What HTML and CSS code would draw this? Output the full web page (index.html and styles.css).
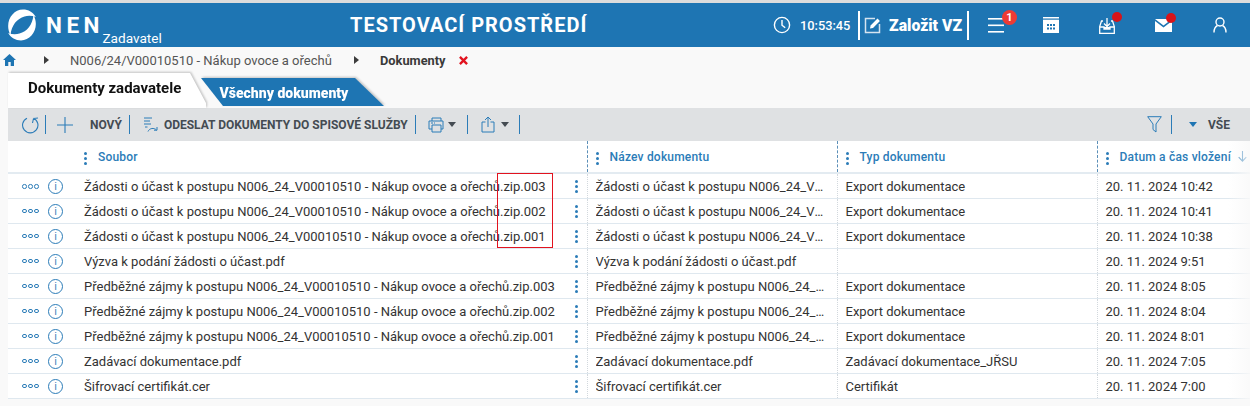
FILE: index.html
```html
<!DOCTYPE html>
<html lang="cs">
<head>
<meta charset="utf-8">
<title>NEN - Dokumenty</title>
<link rel="stylesheet" href="styles.css">
</head>
<body>
<header class="topbar">
  <div class="brand">
    <svg class="logo" width="32" height="32" viewBox="0 0 32 32" fill="#fff"><path d="M4.500 26C-2 14 6 .6 17 .6c5.500 0 10 2.600 12.800 7.400C26 6.500 22 6.400 18.500 7.400 11 9.500 5.500 16 4.500 26z"/><path d="M4.500 26C-2 14 6 .6 17 .6c5.500 0 10 2.600 12.800 7.400C26 6.500 22 6.400 18.500 7.400 11 9.500 5.500 16 4.500 26z" transform="rotate(180 16 16)"/></svg>
    <span class="nen">NEN</span>
    <span class="role">Zadavatel</span>
  </div>
  <div class="env">TESTOVACÍ PROSTŘEDÍ</div>
  <div class="actions">
    <svg class="clock" width="18" height="18" viewBox="0 0 18 18" fill="none" stroke="#fff" stroke-width="1.4"><circle cx="9" cy="9" r="7.6"/><path d="M9 4v5.2l3.2 2.6"/></svg>
    <span class="time">10:53:45</span>
    <div class="create">
      <svg width="18" height="18" viewBox="0 0 18 18" fill="none" stroke="#fff" stroke-width="1.5"><path d="M11 2.500H1.500v14h14V8" stroke="#d5e4f0"/><path d="M6 12.500l.6-3L13.500 2.600l2.400 2.400-6.900 6.900z" fill="#fff" stroke="none"/></svg>
      <span>Založit VZ</span>
    </div>
    <div class="ico menu"><svg width="16" height="15" viewBox="0 0 16 15" fill="#fff"><rect width="16" height="1.600"/><rect y="6.500" width="16" height="1.600"/><rect y="13" width="16" height="1.600"/></svg><b class="badge">1</b></div>
    <div class="ico cal"><svg width="16" height="16" viewBox="0 0 16 16"><rect width="16" height="16" fill="#fff"/><rect y="1.500" width="16" height="1.200" fill="#1e75b3"/><path d="M4 7h2v2H4zM7 7h2v2H7zM10 7h2v2h-2zM4 10.500h2v2H4zM7 10.500h2v2H7zM10 10.500h2v2h-2z" fill="#1e75b3"/></svg></div>
    <div class="ico inbox"><svg width="16" height="17" viewBox="0 0 16 17" fill="none" stroke="#fff" stroke-width="1.300"><path d="M8 1v8M5 6.500L8 9.500l3-3"/><path d="M4 4H2.500L.7 9.500v6.800h14.600V9.500L13.500 4H12"/><path d="M.7 10H5v2h6v-2h4.300" fill="#fff"/></svg><i class="dot"></i></div>
    <div class="ico mail"><svg width="17" height="13" viewBox="0 0 17 13"><path d="M0 0h17L8.500 6.500z M0 2l8.500 6.500L17 2v11H0z" fill="#fff"/></svg><i class="dot"></i></div>
    <div class="ico user"><svg width="14" height="16" viewBox="0 0 14 16" fill="none" stroke="#fff" stroke-width="1.400"><circle cx="7" cy="5" r="4"/><path d="M1 15.500c0-3.500 1.500-6 3.500-7M13 15.500c0-3.500-1.500-6-3.500-7"/></svg></div>
  </div>
</header>

<nav class="crumbs">
  <svg class="home" width="13" height="12" viewBox="0 0 13 12" fill="#1e75b3"><path d="M6.500 0L0 6h2v6h3.300V8h2.400v4H11V6h2z"/></svg>
  <i class="arrow a1"></i>
  <span class="crumb">N006/24/V00010510 - Nákup ovoce a ořechů</span>
  <i class="arrow a2"></i>
  <strong class="current">Dokumenty</strong>
  <svg class="close" width="9" height="9" viewBox="0 0 10 10" stroke="#e2131f" stroke-width="2.600"><path d="M1 1l8 8M9 1l-8 8"/></svg>
</nav>

<div class="tabs">
  <div class="tab-wrap"><div class="tab active">Dokumenty zadavatele</div></div>
  <div class="tab-wrap"><div class="tab other">Všechny dokumenty</div></div>
</div>

<div class="toolbar">
  <svg class="t-refresh" width="18" height="18" viewBox="0 0 18 18" fill="none" stroke="#2b7cb8" stroke-width="1.100"><path d="M6 2.200a7.700 7.700 0 1 0 6.500 0M12.500 2.500L11.500 7M12.500 2.500L17 2"/></svg>
  <i class="sep s1"></i>
  <svg class="t-plus" width="16" height="16" viewBox="0 0 16 16" stroke="#2b7cb8" stroke-width="1.100"><path d="M8 0v16M0 8h16"/></svg>
  <span class="t-new">NOVÝ</span>
  <i class="sep s2"></i>
  <svg class="t-send" width="14" height="15" viewBox="0 0 14 15" fill="none" stroke="#2b7cb8" stroke-width="1"><path d="M0 1h8M0 4h6M0 7h7M1 10h2.500M4 14.500c1.500-3.500 6-4 8.500-1.500M13 10v3.200h-3"/></svg>
  <span class="t-send-label">ODESLAT DOKUMENTY DO SPISOVÉ SLUŽBY</span>
  <i class="sep s3"></i>
  <svg class="t-print" width="16" height="16" viewBox="0 0 16 16" fill="none" stroke="#2b7cb8" stroke-width="1"><path d="M4 4V1h9v3M4 12H1V4h14v8h-2M4 8h9v7H4z"/><path d="M3 6h2M6 6h1"/></svg>
  <i class="caret"></i>
  <i class="sep s4"></i>
  <svg class="t-share" width="14" height="17" viewBox="0 0 14 17" fill="none" stroke="#2b7cb8" stroke-width="1"><path d="M4.500 6H1v10h12V6H9.500M7 11V1M4 4l3-3 3 3"/></svg>
  <i class="caret c-share"></i>
  <i class="sep s5"></i>
  <span class="grow"></span>
  <svg class="t-filter" width="15" height="17" viewBox="0 0 15 17" fill="none" stroke="#2b7cb8" stroke-width="1"><path d="M.7.700h13.600L9 8v8L6 13.500V8z"/></svg>
  <i class="sep s6"></i>
  <i class="caret blue"></i>
  <span class="t-all">VŠE</span>
</div>

<div class="grid-wrap">
  <table class="grid">
    <colgroup><col class="c0"><col class="c1"><col class="c2"><col class="c3"><col class="c4"></colgroup>
    <thead>
      <tr>
        <th></th>
        <th><span class="kebab hd"><i></i><i></i><i></i></span>Soubor</th>
        <th class="div"><span class="kebab hd"><i></i><i></i><i></i></span>Název dokumentu</th>
        <th class="div"><span class="kebab hd"><i></i><i></i><i></i></span>Typ dokumentu</th>
        <th class="div"><span class="kebab hd"><i></i><i></i><i></i></span>Datum a čas vložení<svg class="sort" width="9" height="11" viewBox="0 0 9 11" fill="none" stroke="#2b7cb8" stroke-width="1.100"><path d="M4.500 0v10M.7 6.200l3.800 3.900 3.800-3.900"/></svg></th>
      </tr>
    </thead>
    <tbody>
      <tr><td class="act"><span class="dots"><i></i><i></i><i></i></span><span class="info">i</span></td><td class="file">Žádosti o účast k postupu N006_24_V00010510 - Nákup ovoce a ořechů.zip.003<span class="kebab"><i></i><i></i><i></i></span></td><td><div class="cut">Žádosti o účast k postupu N006_24_V00010510 - Nákup ovoce a ořechů.zip.003</div></td><td>Export dokumentace</td><td>20. 11. 2024 10:42</td></tr>
      <tr><td class="act"><span class="dots"><i></i><i></i><i></i></span><span class="info">i</span></td><td class="file">Žádosti o účast k postupu N006_24_V00010510 - Nákup ovoce a ořechů.zip.002<span class="kebab"><i></i><i></i><i></i></span></td><td><div class="cut">Žádosti o účast k postupu N006_24_V00010510 - Nákup ovoce a ořechů.zip.002</div></td><td>Export dokumentace</td><td>20. 11. 2024 10:41</td></tr>
      <tr><td class="act"><span class="dots"><i></i><i></i><i></i></span><span class="info">i</span></td><td class="file">Žádosti o účast k postupu N006_24_V00010510 - Nákup ovoce a ořechů.zip.001<span class="kebab"><i></i><i></i><i></i></span></td><td><div class="cut">Žádosti o účast k postupu N006_24_V00010510 - Nákup ovoce a ořechů.zip.001</div></td><td>Export dokumentace</td><td>20. 11. 2024 10:38</td></tr>
      <tr><td class="act"><span class="dots"><i></i><i></i><i></i></span><span class="info">i</span></td><td class="file">Výzva k podání žádosti o účast.pdf<span class="kebab"><i></i><i></i><i></i></span></td><td><div class="cut">Výzva k podání žádosti o účast.pdf</div></td><td></td><td>20. 11. 2024 9:51</td></tr>
      <tr><td class="act"><span class="dots"><i></i><i></i><i></i></span><span class="info">i</span></td><td class="file">Předběžné zájmy k postupu N006_24_V00010510 - Nákup ovoce a ořechů.zip.003<span class="kebab"><i></i><i></i><i></i></span></td><td><div class="cut">Předběžné zájmy k postupu N006_24_V00010510 - Nákup ovoce a ořechů.zip.003</div></td><td>Export dokumentace</td><td>20. 11. 2024 8:05</td></tr>
      <tr><td class="act"><span class="dots"><i></i><i></i><i></i></span><span class="info">i</span></td><td class="file">Předběžné zájmy k postupu N006_24_V00010510 - Nákup ovoce a ořechů.zip.002<span class="kebab"><i></i><i></i><i></i></span></td><td><div class="cut">Předběžné zájmy k postupu N006_24_V00010510 - Nákup ovoce a ořechů.zip.002</div></td><td>Export dokumentace</td><td>20. 11. 2024 8:04</td></tr>
      <tr><td class="act"><span class="dots"><i></i><i></i><i></i></span><span class="info">i</span></td><td class="file">Předběžné zájmy k postupu N006_24_V00010510 - Nákup ovoce a ořechů.zip.001<span class="kebab"><i></i><i></i><i></i></span></td><td><div class="cut">Předběžné zájmy k postupu N006_24_V00010510 - Nákup ovoce a ořechů.zip.001</div></td><td>Export dokumentace</td><td>20. 11. 2024 8:01</td></tr>
      <tr><td class="act"><span class="dots"><i></i><i></i><i></i></span><span class="info">i</span></td><td class="file">Zadávací dokumentace.pdf<span class="kebab"><i></i><i></i><i></i></span></td><td><div class="cut">Zadávací dokumentace.pdf</div></td><td>Zadávací dokumentace_JŘSU</td><td>20. 11. 2024 7:05</td></tr>
      <tr><td class="act"><span class="dots"><i></i><i></i><i></i></span><span class="info">i</span></td><td class="file">Šifrovací certifikát.cer<span class="kebab"><i></i><i></i><i></i></span></td><td><div class="cut">Šifrovací certifikát.cer</div></td><td>Certifikát</td><td>20. 11. 2024 7:00</td></tr>
    </tbody>
  </table>
  <div class="redbox"></div>
  <div class="fade"></div>
</div>
</body>
</html>
```

FILE: styles.css
```css
* { box-sizing: border-box; }
html, body { margin: 0; height: 406px; overflow: hidden; }
body {
  background: #f9f9f9;
  border-top: 3px solid #dcdcdc;
  font-family: Roboto, "Liberation Sans", sans-serif;
  color: #2b2b2b;
}
i { display: block; font-style: normal; }

.topbar {
  height: 44px;
  background: #1e75b3;
  color: #fff;
  display: flex;
  align-items: center;
  position: relative;
}
.brand { display: flex; align-items: center; width: 350px; padding-left: 6px; height: 44px; }
.logo { flex: none; }
.nen { font-size: 22.500px; font-weight: 700; letter-spacing: 4.500px; margin-left: 8px; }
.role { font-size: 13.600px; align-self: flex-end; margin-left: -1.500px; line-height: 18px; }
.env { font-size: 20px; font-weight: 700; letter-spacing: 1px; white-space: nowrap; }
.actions { margin-left: auto; display: flex; align-items: center; height: 44px; }
.clock { margin-right: 9px; }
.time { font-size: 12.800px; font-weight: 500; width: 58px; }
.create {
  display: flex; align-items: center; gap: 7px; height: 29px; width: 111px;
  border-left: 2px solid #fff; border-right: 2px solid #fff;
  padding-left: 4px; font-size: 15.800px; font-weight: 900; white-space: nowrap; margin-right: 19px;
}
.ico { position: relative; display: flex; align-items: center; }
.menu { margin-right: 39px; }
.cal { margin-right: 40px; }
.inbox { margin-right: 40px; }
.mail { margin-right: 41px; }
.user { margin-right: 23px; }
.badge {
  position: absolute; left: 14px; top: -8px; width: 15px; height: 15px; border-radius: 50%;
  background: #ee3b34; font-size: 11px; line-height: 15px; text-align: center; font-weight: 700;
}
.dot { position: absolute; right: -7px; top: -5px; width: 10px; height: 10px; border-radius: 50%; background: #d7141a; }
.mail .dot { right: -4px; top: -6px; }

.crumbs { height: 26px; display: flex; align-items: center; font-size: 13px; color: #555; }
.home { margin-left: 3px; }
.arrow { width: 0; height: 0; border-left: 5px solid #3c3c3c; border-top: 4px solid transparent; border-bottom: 4px solid transparent; }
.a1 { margin-left: 28px; }
.crumb { margin-left: 21px; width: 263px; white-space: nowrap; }
.a2 { margin-left: 21px; }
.current { margin-left: 21px; font-weight: 700; font-size: 12.800px; color: #3a3a3a; }
.close { margin-left: 14px; }

.tabs { height: 35px; display: flex; margin-left: 8px; align-items: flex-end; }
.tab-wrap { filter: drop-shadow(1px -1px 1px rgba(0,0,0,.22)); }
.tab { white-space: nowrap; }
.active {
  height: 35px; width: 198px; padding: 6px 0 0 20px; font-size: 15px; font-weight: 700; color: #111; line-height: 18px;
  background: #fff;
  clip-path: polygon(0 0, 182px 0, 198px 30px, 198px 35px, 0 35px);
}
.other {
  height: 28px; width: 183px; margin: 0 0 2px -5px; padding: 7px 0 0 18.500px; font-size: 14px; font-weight: 900; color: #fff; line-height: 16px;
  background: #1e75b3;
  clip-path: polygon(0 0, 154px 0, 183px 28px, 22px 28px);
}

.toolbar {
  height: 33px; margin-left: 8px; background: #dfe1e3; display: flex; align-items: center;
  font-size: 12px; font-weight: 700; color: #444b52; white-space: nowrap;
}
.sep { width: 1px; height: 19px; background: #2b7cb8; }
.t-refresh { margin-left: 13px; }
.s1 { margin-left: 6px; }
.t-plus { margin-left: 11px; }
.t-new { margin-left: 17px; }
.s2 { margin-left: 7px; }
.t-send { margin-left: 14px; }
.t-send-label { margin-left: 6px; width: 244px; }
.s3 { margin-left: 7px; }
.t-print { margin-left: 12px; }
.caret { width: 0; height: 0; margin-left: 4px; border-top: 5px solid #444b52; border-left: 4.500px solid transparent; border-right: 4.500px solid transparent; }
.caret.c-share { margin-left: 6px; }
.caret.blue { border-top-color: #1e75b3; margin-left: 17px; }
.s4 { margin-left: 11px; }
.t-share { margin-left: 13px; }
.s5 { margin-left: 10px; }
.grow { flex: 1; }
.t-filter { margin-right: 6px; }
.s6 { margin-left: 3px; }
.t-all { margin-left: 11px; margin-right: 20px; }

.grid-wrap { position: relative; margin-left: 8px; background: #fff; height: 258px; overflow: hidden; }
.grid { border-collapse: collapse; table-layout: fixed; width: 1242px; font-size: 13px; }
.c0 { width: 68px; } .c1 { width: 511px; } .c2 { width: 250px; } .c3 { width: 260px; } .c4 { width: 153px; }
th {
  height: 32px; padding: 2px 0 0 8px; text-align: left; font-size: 12px; font-weight: 500; color: #2b7cb8;
  border-bottom: 2px solid #e3ebf1; letter-spacing: .2px; white-space: nowrap; position: relative;
}
th.div { border-left: 1px dashed #5b8fb8; }
td {
  height: 25px; padding: 1px 0 0 8px; border-bottom: 1px solid #dfe8ef; white-space: nowrap; color: #333; position: relative;
}
td + td + td { border-left: 1px dotted #d2d8dd; }
.cut { overflow: hidden; text-overflow: ellipsis; width: 232px; }
.act { padding: 0 0 0 14px; }
.act > span { display: inline-flex; vertical-align: middle; }
.dots { gap: 1.500px; width: 26px; }
.dots i { width: 4.500px; height: 4.500px; border: 1px solid #2b7cb8; border-radius: 50%; }
.info {
  width: 15px; height: 15px; border: 1px solid #2b7cb8; border-radius: 50%; color: #2b7cb8;
  font-size: 10px; line-height: 13px; justify-content: center; font-family: "Liberation Sans", sans-serif;
}
.kebab { display: inline-flex; flex-direction: column; gap: 2px; }
.kebab i { width: 3px; height: 3px; background: #2b7cb8; border-radius: 50%; }
.file .kebab { position: absolute; right: 9px; top: 6px; }
.kebab.hd { margin-right: 11px; vertical-align: middle; }
.sort { margin-left: 7px; vertical-align: -1px; }
.redbox { position: absolute; left: 489px; top: 32px; width: 56px; height: 75px; border: 1px solid #e2131f; pointer-events: none; }
.fade { position: absolute; right: 0; top: 0; width: 22px; height: 100%; background: linear-gradient(90deg, rgba(255,255,255,0), rgba(249,249,249,.85)); }
```
